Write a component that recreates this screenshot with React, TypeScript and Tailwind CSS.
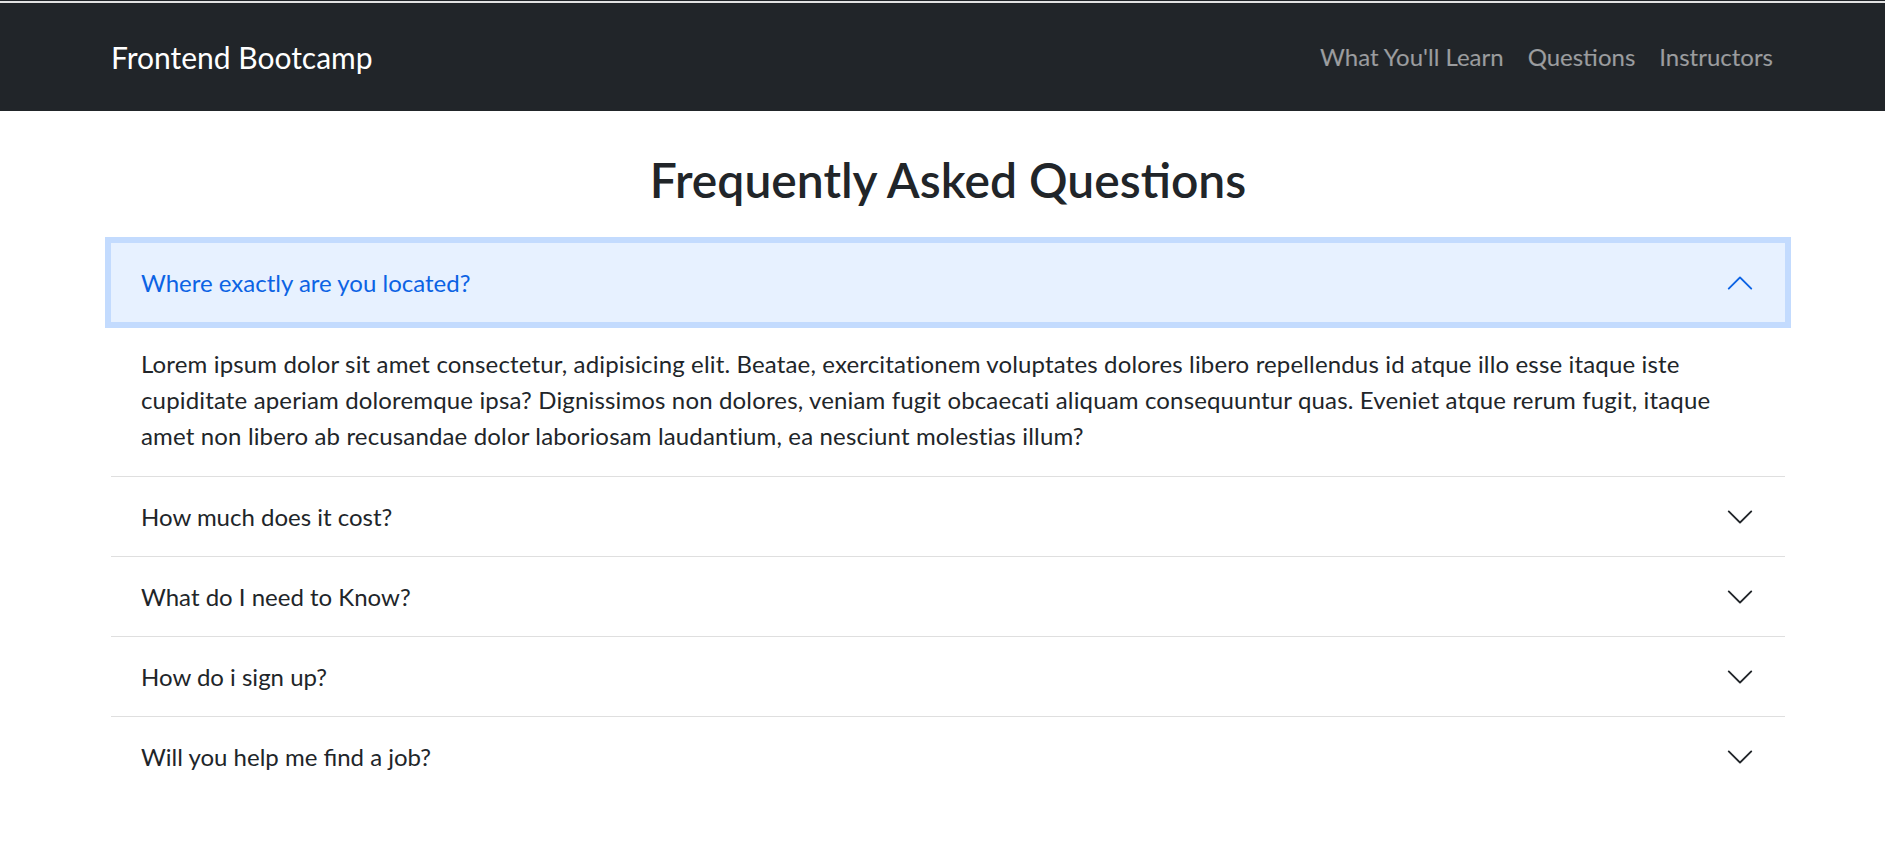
import React from "react";

const faqs = [
  {
    q: "Where exactly are you located?",
    a: "Lorem ipsum dolor sit amet consectetur, adipisicing elit. Beatae, exercitationem voluptates dolores libero repellendus id atque illo esse itaque iste cupiditate aperiam doloremque ipsa? Dignissimos non dolores, veniam fugit obcaecati aliquam consequuntur quas. Eveniet atque rerum fugit, itaque amet non libero ab recusandae dolor laboriosam laudantium, ea nesciunt molestias illum?",
  },
  { q: "How much does it cost?", a: "" },
  { q: "What do I need to Know?", a: "" },
  { q: "How do i sign up?", a: "" },
  { q: "Will you help me find a job?", a: "" },
];

function Chevron({ open }: { open: boolean }) {
  return (
    <svg
      className={open ? "w-[30px] h-[30px] shrink-0 rotate-180 text-[#0c63e4]" : "w-[30px] h-[30px] shrink-0 text-[#212529]"}
      viewBox="0 0 16 16"
      fill="currentColor"
    >
      <path
        fillRule="evenodd"
        d="M1.646 4.646a.5.5 0 0 1 .708 0L8 10.293l5.646-5.647a.5.5 0 0 1 .708.708l-6 6a.5.5 0 0 1-.708 0l-6-6a.5.5 0 0 1 0-.708z"
      />
    </svg>
  );
}

export default function App() {
  const [open, setOpen] = React.useState(0);

  return (
    <div className="min-h-screen bg-white text-[#212529] font-['Segoe_UI',Lato,'Liberation_Sans',sans-serif]">
      <div className="h-[1px] bg-[#212529]" />
      <div className="h-[2px] bg-[#e2e2e2]" />

      <nav className="bg-[#212529] h-[108px]">
        <div className="ml-[111px] w-[1674px] h-full flex items-center justify-between">
          <a href="#" className="text-white text-[30px] leading-[45px]">
            Frontend Bootcamp
          </a>
          <ul className="flex items-center">
            <li><a href="#learn" className="px-3 text-[24px] leading-[36px] text-white/55">What You'll Learn</a></li>
            <li><a href="#questions" className="px-3 text-[24px] leading-[36px] text-white/55">Questions</a></li>
            <li><a href="#instructors" className="px-3 text-[24px] leading-[36px] text-white/55">Instructors</a></li>
          </ul>
        </div>
      </nav>

      <section id="questions" className="ml-[111px] w-[1674px]">
        <h2 className="mt-[40px] text-center text-[48px] leading-[58px] font-semibold">
          Frequently Asked Questions
        </h2>

        <div className="mt-[34px]">
          {faqs.map((f, i) => {
            const isOpen = open === i;
            return (
              <div key={i} className={i < faqs.length - 1 ? "border-b border-[#dfdfdf]" : ""}>
                <button
                  onClick={() => setOpen(isOpen ? -1 : i)}
                  className={
                    isOpen
                      ? "relative z-10 w-full h-[79px] px-[30px] flex items-center justify-between text-left text-[24px] leading-[36px] bg-[#e7f1ff] text-[#0c63e4] ring-[6px] ring-[#c3dbfe]"
                      : "w-full h-[79px] px-[30px] flex items-center justify-between text-left text-[24px] leading-[36px] bg-white text-[#212529]"
                  }
                >
                  <span>{f.q}</span>
                  <Chevron open={isOpen} />
                </button>
                {isOpen && f.a && (
                  <div className="px-[30px] pt-[24px] pb-[22px] text-[24px] leading-[36px] tracking-[0.15px]">{f.a}</div>
                )}
              </div>
            );
          })}
        </div>
      </section>
    </div>
  );
}
